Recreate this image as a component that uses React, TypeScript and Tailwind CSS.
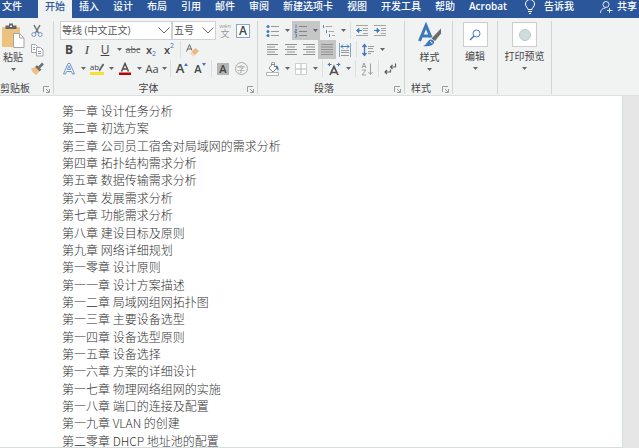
import React, { useState } from 'react';
import { clsx } from 'clsx';

const TABS = ['文件', '开始', '插入', '设计', '布局', '引用', '邮件', '审阅', '新建选项卡', '视图', '开发工具', '帮助', 'Acrobat'];

const CHAPTERS = [
    '第一章 设计任务分析',
    '第二章 初选方案',
    '第三章 公司员工宿舍对局域网的需求分析',
    '第四章 拓扑结构需求分析',
    '第五章 数据传输需求分析',
    '第六章 发展需求分析',
    '第七章 功能需求分析',
    '第八章 建设目标及原则',
    '第九章 网络详细规划',
    '第一零章 设计原则',
    '第一一章 设计方案描述',
    '第一二章 局域网组网拓扑图',
    '第一三章 主要设备选型',
    '第一四章 设备选型原则',
    '第一五章 设备选择',
    '第一六章 方案的详细设计',
    '第一七章 物理网络组网的实施',
    '第一八章 端口的连接及配置',
    '第一九章 VLAN 的创建',
    '第二零章 DHCP 地址池的配置',
];

const Arrow = () => (
    <svg viewBox="0 0 5 3" className="h-[3px] w-[5px] shrink-0" fill="#666">
        <path d="M0 0h5L2.5 3z" />
    </svg>
);

interface ToolProps {
    label: string;
    active?: boolean;
    width?: string;
    children: React.ReactNode;
}

const Tool: React.FC<ToolProps> = ({ label, active, width = 'w-[18px]', children }) => (
    <button
        aria-label={label}
        className={clsx('flex h-[19px] shrink-0 items-center justify-center leading-none', width, active && 'bg-[#c6c6c6]')}
    >
        {children}
    </button>
);

const More = ({ label, active, width = 'w-2.5' }: { label: string; active?: boolean; width?: string }) => (
    <Tool label={`${label} 选项`} active={active} width={width}>
        <Arrow />
    </Tool>
);

const Sep = () => <span className="mx-0.5 h-[17px] w-px shrink-0 bg-[#dcdedf]" />;

const Row = ({ children }: { children: React.ReactNode }) => <div className="flex h-[19px] items-center">{children}</div>;

const Icon = ({ children, size = 'size-3.5', box = '0 0 14 14' }: { children: React.ReactNode; size?: string; box?: string }) => (
    <svg viewBox={box} className={clsx('shrink-0', size)} fill="none">
        {children}
    </svg>
);

const Launcher = ({ label }: { label: string }) => (
    <button aria-label={label} className="absolute right-[3px] bottom-px">
        <svg viewBox="0 0 7 7" className="size-[7px]" fill="none" stroke="#9a9a9a">
            <path d="M.5 6V.5H6M3 3l3 3M6.5 3v3.5H3" />
        </svg>
    </button>
);

interface GroupProps {
    label?: string;
    launcher?: boolean;
    className?: string;
    labelClass?: string;
    children: React.ReactNode;
}

const Group: React.FC<GroupProps> = ({ label, launcher, className, labelClass = 'text-center', children }) => (
    <section className={clsx('relative flex shrink-0 flex-col border-r border-[#d2d4d6]', className)}>
        {children}
        {label && <div className={clsx('mt-auto h-3 leading-3', labelClass)}>{label}</div>}
        {launcher && <Launcher label={`${label} 设置`} />}
    </section>
);

const Select = ({ label, value, className }: { label: string; value: string; className: string }) => (
    <div className={clsx('relative h-[19px] shrink-0', className)}>
        <select aria-label={label} className="h-full w-full appearance-none border border-[#cfd1d3] bg-white pl-px text-[#555] outline-none">
            <option>{value}</option>
        </select>
        <svg viewBox="0 0 12 7" className="pointer-events-none absolute top-1.5 right-0.5 h-[7px] w-3" fill="none" stroke="#666">
            <path d="M.5.5 6 6 11.5.5" />
        </svg>
    </div>
);

const Lines = ({ rows }: { rows: [number, number][] }) => (
    <Icon>
        {rows.map(([from, to], i) => (
            <path key={i} d={`M${from} ${1.5 + i * 2.5}H${to}`} stroke="#8f8f8f" />
        ))}
    </Icon>
);

const ClipboardGroup = () => (
    <Group label="剪贴板" launcher className="w-[54px]" labelClass="text-left">
        <div className="flex">
            <button className="flex w-7 flex-col items-center pt-px pr-0.5 leading-3">
                <svg viewBox="0 0 24 28" className="h-7 w-6" fill="none">
                    <path d="M2 5h16a1 1 0 0 1 1 1v18a1 1 0 0 1-1 1H2a1 1 0 0 1-1-1V6a1 1 0 0 1 1-1z" fill="#ecc27f" />
                    <path d="M4.500 7V3.500h3.500V1.500h4v2h3.500V7z" fill="#666" />
                    <path d="M9 3.500h2V5H9z" fill="#eee" />
                    <path d="M12.500 11.500h6l4.500 4.500v9.500H12.500z" fill="#fff" stroke="#a5a5a5" />
                    <path d="M18.500 11.500V16H23" stroke="#a5a5a5" />
                </svg>
                <span className="mt-px">粘贴</span>
                <span className="flex h-3 items-center"><Arrow /></span>
            </button>
            <div className="flex flex-col">
                <Tool label="剪切">
                    <Icon>
                        <path d="M4 1l4.500 8M10 1L5.500 9" stroke="#707070" strokeWidth="1.500" />
                        <circle cx="3.800" cy="10.500" r="2" stroke="#7596c9" />
                        <circle cx="10.200" cy="10.500" r="2" stroke="#7596c9" />
                    </Icon>
                </Tool>
                <Tool label="复制">
                    <Icon>
                        <path d="M1.500 1.500h4l2 2v6h-6z" fill="#fff" stroke="#a5a5a5" />
                        <path d="M6.500 4.500h4l2.500 2.500v6H6.500z" fill="#fff" stroke="#a5a5a5" />
                        <path d="M3 4.500h2M3 6.500h2M8 8.500h3M8 10.500h3" stroke="#86a5d2" />
                    </Icon>
                </Tool>
                <Tool label="格式刷">
                    <Icon>
                        <path d="M1 6.500l4.500-1.500 4 4-3 4c-2.500-1-4.500-3.500-5.500-6.500z" fill="#eebf7d" />
                        <path d="M6 4l4.500 4.500M9 5.500L13 1.500" stroke="#707070" strokeWidth="2.500" />
                    </Icon>
                </Tool>
            </div>
        </div>
    </Group>
);

const FontGroup = () => (
    <Group label="字体" launcher className="w-[204px] pl-1.5" labelClass="pr-5 text-center">
        <Row>
            <Select label="字体" value="等线 (中文正文)" className="w-28" />
            <Select label="字号" value="五号" className="w-11" />
            <Tool label="拼音指南">
                <span className="flex flex-col items-center text-[#999]">
                    <span className="text-[6px] leading-[6px]">wén</span>
                    <span className="text-[9px] leading-[9px]">文</span>
                </span>
            </Tool>
            <Tool label="字符边框">
                <span className="flex size-3.5 items-center justify-center border border-[#8ba6d0] bg-white text-xs leading-none font-semibold">A</span>
            </Tool>
        </Row>
        <Row>
            <Tool label="加粗"><b className="text-xs leading-none">B</b></Tool>
            <Tool label="倾斜"><i className="font-['Liberation_Serif',serif] text-[13px] leading-none">I</i></Tool>
            <Tool label="下划线"><u className="text-xs leading-none">U</u></Tool>
            <More label="下划线" />
            <Tool label="删除线"><s className="text-[9px] leading-none text-[#666]">abc</s></Tool>
            <Tool label="下标">
                <span className="text-[11px] leading-none font-semibold">x</span>
                <span className="self-end text-[7px] leading-[11px] text-[#3f78bd]">2</span>
            </Tool>
            <Tool label="上标">
                <span className="text-[11px] leading-none font-semibold">x</span>
                <span className="self-start text-[7px] leading-[11px] text-[#3f78bd]">2</span>
            </Tool>
            <Sep />
            <Tool label="清除格式">
                <Icon>
                    <path d="M1.500 8.500L4.500 1.500l2.500 6M2.500 6h4" stroke="#666" />
                    <path d="M5 10.500l5.500-5.500 3.500 3-5.500 5.500z" fill="#ecb880" />
                    <path d="M5 10.500l1.500-1.500 3.500 3-1.500 1.500z" fill="#f6dcc0" />
                </Icon>
            </Tool>
        </Row>
        <Row>
            <Tool label="文本效果">
                <Icon>
                    <path d="M1.500 12L6 1.500h2L12.500 12h-2L9.500 9.500h-5L3.500 12zM5.300 7.500h3.400L7 3.500z" fill="#fff" stroke="#6c94cc" />
                </Icon>
            </Tool>
            <More label="文本效果" />
            <Tool label="突出显示">
                <span className="flex flex-col">
                    <span className="flex h-2.5 items-start text-[8px] leading-[10px]">
                        ab
                        <svg viewBox="0 0 5 10" className="h-2.5 w-[5px]" fill="none" stroke="#666" strokeWidth="2">
                            <path d="M0 9l4.500-7" />
                        </svg>
                    </span>
                    <span className="h-[3px] bg-[#f6e233]" />
                </span>
            </Tool>
            <More label="突出显示" />
            <Tool label="字体颜色">
                <Icon>
                    <path d="M3.500 9.500L7 1.500l3.500 8M4.500 7h5" stroke="#505050" strokeWidth="1.500" />
                    <path d="M1 10.500h12V13H1z" fill="#c00000" />
                </Icon>
            </Tool>
            <More label="字体颜色" />
            <Tool label="更改大小写" width="w-4"><span className="text-[11px]">Aa</span></Tool>
            <More label="更改大小写" width="w-2" />
            <Sep />
            <Tool label="增大字号">
                <span className="text-[13px] leading-none font-semibold">A</span>
                <svg viewBox="0 0 4 3" className="mt-1 h-[3px] w-1 self-start" fill="#3f78bd"><path d="M0 3h4L2 0z" /></svg>
            </Tool>
            <Tool label="减小字号">
                <span className="text-[11px] leading-none font-semibold">A</span>
                <svg viewBox="0 0 4 3" className="mt-1 h-[3px] w-1 self-start" fill="#3f78bd"><path d="M0 0h4L2 3z" /></svg>
            </Tool>
            <Sep />
            <Tool label="字符底纹">
                <span className="flex size-3 items-center justify-center bg-[#b5b5b5] text-[11px] leading-none font-semibold">A</span>
            </Tool>
            <Tool label="带圈字符">
                <span className="flex size-[13px] items-center justify-center rounded-full border border-[#aaa] text-[8px] leading-none text-[#999]">字</span>
            </Tool>
        </Row>
    </Group>
);

const ParagraphGroup = () => (
    <Group label="段落" launcher className="w-[147px] pl-1.5" labelClass="pr-5 text-center">
        <Row>
            <Tool label="项目符号">
                <Icon>
                    <path d="M5 2.500h8M5 7.500h8M5 11.500h8" stroke="#999" />
                    <g fill="#3f78bd"><circle cx="2" cy="2.500" r="1.500" /><circle cx="2" cy="7.500" r="1.500" /><circle cx="2" cy="11.500" r="1.500" /></g>
                </Icon>
            </Tool>
            <More label="项目符号" />
            <Tool label="编号" active>
                <Icon>
                    <path d="M5 2.500h8M5 7.500h8M5 11.500h8" stroke="#858585" />
                    <path d="M2 .5v3.500M1 5.500h1.500v1.500H1v1.500h2M1 10h1.500v3H1" stroke="#5a86c0" />
                </Icon>
            </Tool>
            <More label="编号" active />
            <Tool label="多级列表">
                <Icon>
                    <path d="M3.500 2.500H10M6.500 7.500H12M10 11.500h3" stroke="#aaa" />
                    <path d="M1.500 1v3M4.500 6v3M7.500 10v3" stroke="#5a86c0" />
                </Icon>
            </Tool>
            <More label="多级列表" />
            <Sep />
            <Tool label="减少缩进">
                <Icon>
                    <path d="M1 1.500h12M8 4.500h5M8 6.500h5M8 9.500h5M1 11.500h12" stroke="#a5a5a5" />
                    <path d="M4 4.500L1.500 6.500 4 8.500zM3 6.500h4" fill="#3f78bd" stroke="#3f78bd" />
                </Icon>
            </Tool>
            <Tool label="增加缩进">
                <Icon>
                    <path d="M1 1.500h12M8 4.500h5M8 6.500h5M8 9.500h5M1 11.500h12" stroke="#a5a5a5" />
                    <path d="M4 4.500l2.500 2L4 8.500zM1 6.500h4" fill="#3f78bd" stroke="#3f78bd" />
                </Icon>
            </Tool>
        </Row>
        <Row>
            <Tool label="左对齐"><Lines rows={[[1, 12], [1, 9], [1, 12], [1, 9], [1, 12]]} /></Tool>
            <Tool label="居中"><Lines rows={[[1, 13], [3, 11], [1, 13], [3, 11], [1, 13]]} /></Tool>
            <Tool label="右对齐"><Lines rows={[[1, 13], [4, 13], [1, 13], [4, 13], [1, 13]]} /></Tool>
            <Tool label="两端对齐" active><Lines rows={[[1, 13], [1, 13], [1, 13], [1, 13], [1, 13]]} /></Tool>
            <Tool label="分散对齐">
                <Icon>
                    <path d="M1.500 0v14M12.500 0v14" stroke="#7fa2d2" />
                    <path d="M3 3.500h8M5 1.500l-2 2 2 2M9 1.500l2 2-2 2" stroke="#3f78bd" />
                    <path d="M3 7.500h8M3 9.500h8M3 12.500h8" stroke="#999" />
                </Icon>
            </Tool>
            <Sep />
            <Tool label="行距">
                <Icon>
                    <path d="M3.500 2v10M1.500 4l2-2.500 2 2.500M1.500 10l2 2.500 2-2.500" stroke="#3f78bd" strokeWidth="1.300" />
                    <path d="M7 3.500h6M7 5.500h5M7 8.500h6M7 10.500h3" stroke="#999" />
                </Icon>
            </Tool>
            <More label="行距" />
        </Row>
        <Row>
            <Tool label="底纹">
                <Icon>
                    <path d="M3 6l4-4 4 4-4 4z" fill="#fff" stroke="#888" />
                    <path d="M5.500 4V1.500a1.500 1.500 0 0 1 3 0V5" stroke="#888" />
                    <path d="M10 3.500c2 .5 3 2 2.500 5.500-1.500-1-1-3-2.500-3z" fill="#3f78bd" />
                    <path d="M.5 10.500h12v3H.5z" fill="#fff" stroke="#b5b5b5" />
                </Icon>
            </Tool>
            <More label="底纹" />
            <Tool label="边框">
                <Icon>
                    <path d="M1.500 1.500h11v11h-11z" fill="#fff" stroke="#d0d0d0" />
                    <path d="M7 1.500v11M1.500 7h11" stroke="#b5b5b5" />
                </Icon>
            </Tool>
            <More label="边框" />
            <Sep />
            <Tool label="中文版式">
                <Icon>
                    <path d="M3 13L7 4.500l4 8.500M4.500 10.500h5" stroke="#505050" strokeWidth="1.700" />
                    <path d="M3 .5L.5 2.500 3 4.500zM11 .5l2.500 2-2.500 2z" fill="#3f78bd" />
                    <path d="M2 2.500h2.500M9.500 2.500H12" stroke="#3f78bd" />
                </Icon>
            </Tool>
            <More label="中文版式" />
            <Sep />
            <Tool label="排序">
                <Icon>
                    <path d="M2 6l2-5 2 5M3 4.500h2M2 8h4l-4 5h4M10.500 1.500V12M8.500 10l2 2.500 2-2.500" stroke="#a0a0a0" />
                </Icon>
            </Tool>
            <Sep />
            <Tool label="显示编辑标记">
                <Icon>
                    <path d="M12.500 1.500V5H7.500M9.500 3l-2 2 2 2M7.500 7.500v2.500H2M4 8l-2 2 2 2" stroke="#606060" strokeWidth="1.200" />
                </Icon>
            </Tool>
        </Row>
    </Group>
);

const StyleGroup = () => (
    <Group label="样式" launcher className="w-12" labelClass="pl-1.5">
        <button className="flex flex-col items-center pt-px pl-0.5 leading-3">
            <svg viewBox="0 0 24 26" className="h-7 w-6" fill="none">
                <path d="M1.500 18L8 2.500l5 12M4 13h7.500" stroke="#3d78b8" strokeWidth="3" />
                <path d="M13.500 15.500L23 5.500v5l-6 7.500z" fill="#6b6b6b" />
                <path d="M5 23c4-1 4-5.500 7.500-6.500 2.500 0 4 1.500 3.500 3.500-1.500 3.500-7 3.500-11 3z" fill="#3d78b8" />
                <path d="M12 18.500c1.500 0 2 1 2 2" stroke="#fff" />
            </svg>
            <span className="mt-px">样式</span>
            <span className="flex h-3 items-center"><Arrow /></span>
        </button>
    </Group>
);

const BoxButton = ({ label, children }: { label: string; children: React.ReactNode }) => (
    <button className="flex flex-col items-center pt-px leading-3">
        <span className="flex size-[25px] items-center justify-center border border-[#cbcdcf] bg-white">{children}</span>
        <span className="mt-[3px]">{label}</span>
        <span className="flex h-3 items-center"><Arrow /></span>
    </button>
);

const App: React.FC = () => {
    const [activeTab, setActiveTab] = useState('开始');

    return (
        <div className="flex h-screen min-h-[448px] flex-col overflow-hidden bg-[#e6e6e6] font-['Open_Sans','Noto_Sans_CJK_SC',sans-serif] text-[10px] text-[#444]">
            <nav className="flex h-[18px] shrink-0 items-stretch overflow-hidden bg-[#2b579a] leading-3 font-medium whitespace-nowrap text-white">
                {TABS.map((tab, i) => (
                    <button
                        key={tab}
                        onClick={() => setActiveTab(tab)}
                        className={clsx(
                            'shrink-0 pb-1.5',
                            i === 0 ? 'pr-4 pl-0.5' : 'px-[7px]',
                            tab === 'Acrobat' && 'font-semibold',
                            tab === activeTab && 'bg-[#f1f3f3] text-[#2b579a]'
                        )}
                    >
                        {tab}
                    </button>
                ))}
                <button className="ml-2 flex items-start gap-2 pl-0.5">
                    <svg viewBox="0 0 12 14" className="h-3.5 w-3" fill="none" stroke="#fff">
                        <path d="M4 9.500C4 7.500 1.500 7 1.500 4a4.500 4.500 0 0 1 9 0c0 3-2.500 3.500-2.500 5.500zM4 11.500h4M5 13.500h2" />
                    </svg>
                    <span>告诉我</span>
                </button>
                <button className="ml-auto flex items-start gap-1 pr-0.5">
                    <svg viewBox="0 0 13 14" className="h-3.5 w-[13px]" fill="none" stroke="#dfe6f2">
                        <circle cx="6" cy="4.500" r="3" />
                        <path d="M.5 13c0-3 2-5 5-5M9.500 8v5M7 10.500h5.500" />
                    </svg>
                    <span>共享</span>
                </button>
            </nav>

            <div className="flex h-[78px] shrink-0 border-b border-[#dde1e2] bg-[#f1f3f3] pt-[3px] pb-px">
                <ClipboardGroup />
                <FontGroup />
                <ParagraphGroup />
                <StyleGroup />
                <Group className="w-[45px] items-center">
                    <BoxButton label="编辑">
                        <Icon size="size-3" box="0 0 12 12">
                            <circle cx="7.500" cy="4.500" r="3.500" stroke="#3f78bd" />
                            <path d="M5 7L1 11" stroke="#3f78bd" strokeWidth="1.500" />
                        </Icon>
                    </BoxButton>
                </Group>
                <Group className="w-[54px] items-center">
                    <BoxButton label="打印预览">
                        <span className="size-3 rounded-full border border-[#bccaca] bg-[#cfdcdc]" />
                    </BoxButton>
                </Group>
            </div>

            <main className="mr-4 flex flex-1 flex-col border-r border-b border-[#d3dfdf] bg-white pt-[9px] pl-[62px]">
                <ol className="flex flex-1 flex-col justify-between font-['Noto_Sans_CJK_SC',sans-serif] text-xs leading-3 font-light whitespace-nowrap text-[#333]">
                    {CHAPTERS.map((chapter) => (
                        <li key={chapter}>{chapter}</li>
                    ))}
                </ol>
            </main>
        </div>
    );
};

export default App;
